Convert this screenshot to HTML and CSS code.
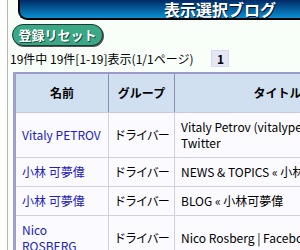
FILE: index.html
```html
<!DOCTYPE html>
<html>
<head>
    <meta charset="UTF-8">
    <title>表示選択ブログ</title>
    <link rel="stylesheet" href="styles.css">
</head>
<body>
    <div class="page">
        <div class="title-bar">表示選択ブログ</div>
        <a href="#" class="reset-btn">登録リセット</a>
        <div class="pager">
            <span>19件中 19件[1-19]表示(1/1ページ)</span>
            <span class="page-no">1</span>
        </div>
        <table id="blogTable">
            <tr>
                <th class="col-name">名前</th>
                <th class="col-group">グループ</th>
                <th class="col-title">タイトル</th>
            </tr>
            <tr>
                <td><a href="#">Vitaly PETROV</a></td>
                <td class="group">ドライバー</td>
                <td>Vitaly Petrov (vitalypetrov) on Twitter</td>
            </tr>
            <tr>
                <td><a href="#">小林 可夢偉</a></td>
                <td class="group">ドライバー</td>
                <td>NEWS &amp; TOPICS « 小林可夢偉</td>
            </tr>
            <tr>
                <td><a href="#">小林 可夢偉</a></td>
                <td class="group">ドライバー</td>
                <td>BLOG « 小林可夢偉</td>
            </tr>
            <tr>
                <td><a href="#">Nico ROSBERG</a></td>
                <td class="group">ドライバー</td>
                <td>Nico Rosberg | Facebook</td>
            </tr>
        </table>
    </div>
</body>
</html>
```
FILE: styles.css
```css
/* ページ全体 */
body {
    margin: 0;
    padding: 0;
    background-color: #ffffff;
    font-family: "Noto Sans CJK JP", "DejaVu Sans", sans-serif;
    font-size: 12px;
    color: #000;
    overflow: hidden;
}

.page {
    margin-left: 7px;
    border-left: 1px solid #c8b0b0;
    background-color: #f8fff9;
    padding-left: 2px;
    width: 600px;
    min-height: 250px;
}

.title-bar {
    margin-left: 8px;
    width: 400px;
    height: 18px;
    line-height: 18px;
    background: linear-gradient(#002a66, #0a90d0);
    border-left: 2px solid #000;
    border-bottom: 2px solid #000;
    border-bottom-left-radius: 9px;
    color: #fff;
    font-weight: bold;
    font-size: 16px;
    text-align: center;
    text-shadow: 1px 1px 0 #001030;
}

.reset-btn {
    display: inline-block;
    margin: 4px 0 0 2px;
    width: 89px;
    height: 20px;
    line-height: 20px;
    background-color: #3aa887;
    border: 1px solid #1c3c30;
    border-radius: 11px;
    color: #fff;
    font-weight: bold;
    font-size: 13px;
    text-align: center;
    text-decoration: none;
    text-shadow: 1px 1px 0 #1a4a3a;
    box-shadow: 1px 1px 0 #555;
}

.pager {
    display: flex;
    align-items: center;
    height: 19px;
    margin-top: 3px;
}

.page-no {
    display: inline-block;
    margin-left: 18px;
    width: 16px;
    height: 15px;
    line-height: 15px;
    text-align: center;
    font-weight: bold;
    background-color: #e6e6f6;
    border: 1px solid #d8d8ee;
}

table {
    margin-left: 3px;
    margin-top: 4px;
    border-collapse: collapse;
    border-top: 2px solid #9a9ac8;
    border-left: 3px solid #a0a0cc;
    table-layout: fixed;
    width: 368px;
}

.col-name {
    width: 80px;
}

.col-group {
    width: 53px;
}

.col-title {
    width: 193px;
}

th, td {
    padding: 6px 6px;
    line-height: 16px;
    text-align: left;
    vertical-align: middle;
}

th {
    padding: 11px 6px;
    text-align: center;
    background-color: #d0e0f0;
    border-right: 1px solid #8a90b4;
    border-bottom: 1px solid #c8c8dc;
}

td {
    background-color: #fafaff;
    border-right: 1px solid #d0d0e2;
    border-bottom: 1px solid #d0d0e2;
}

td.group {
    padding-left: 5px;
    padding-right: 3px;
    white-space: nowrap;
    letter-spacing: -1px;
}

td a {
    color: #2020c0;
    text-decoration: none;
}
```
